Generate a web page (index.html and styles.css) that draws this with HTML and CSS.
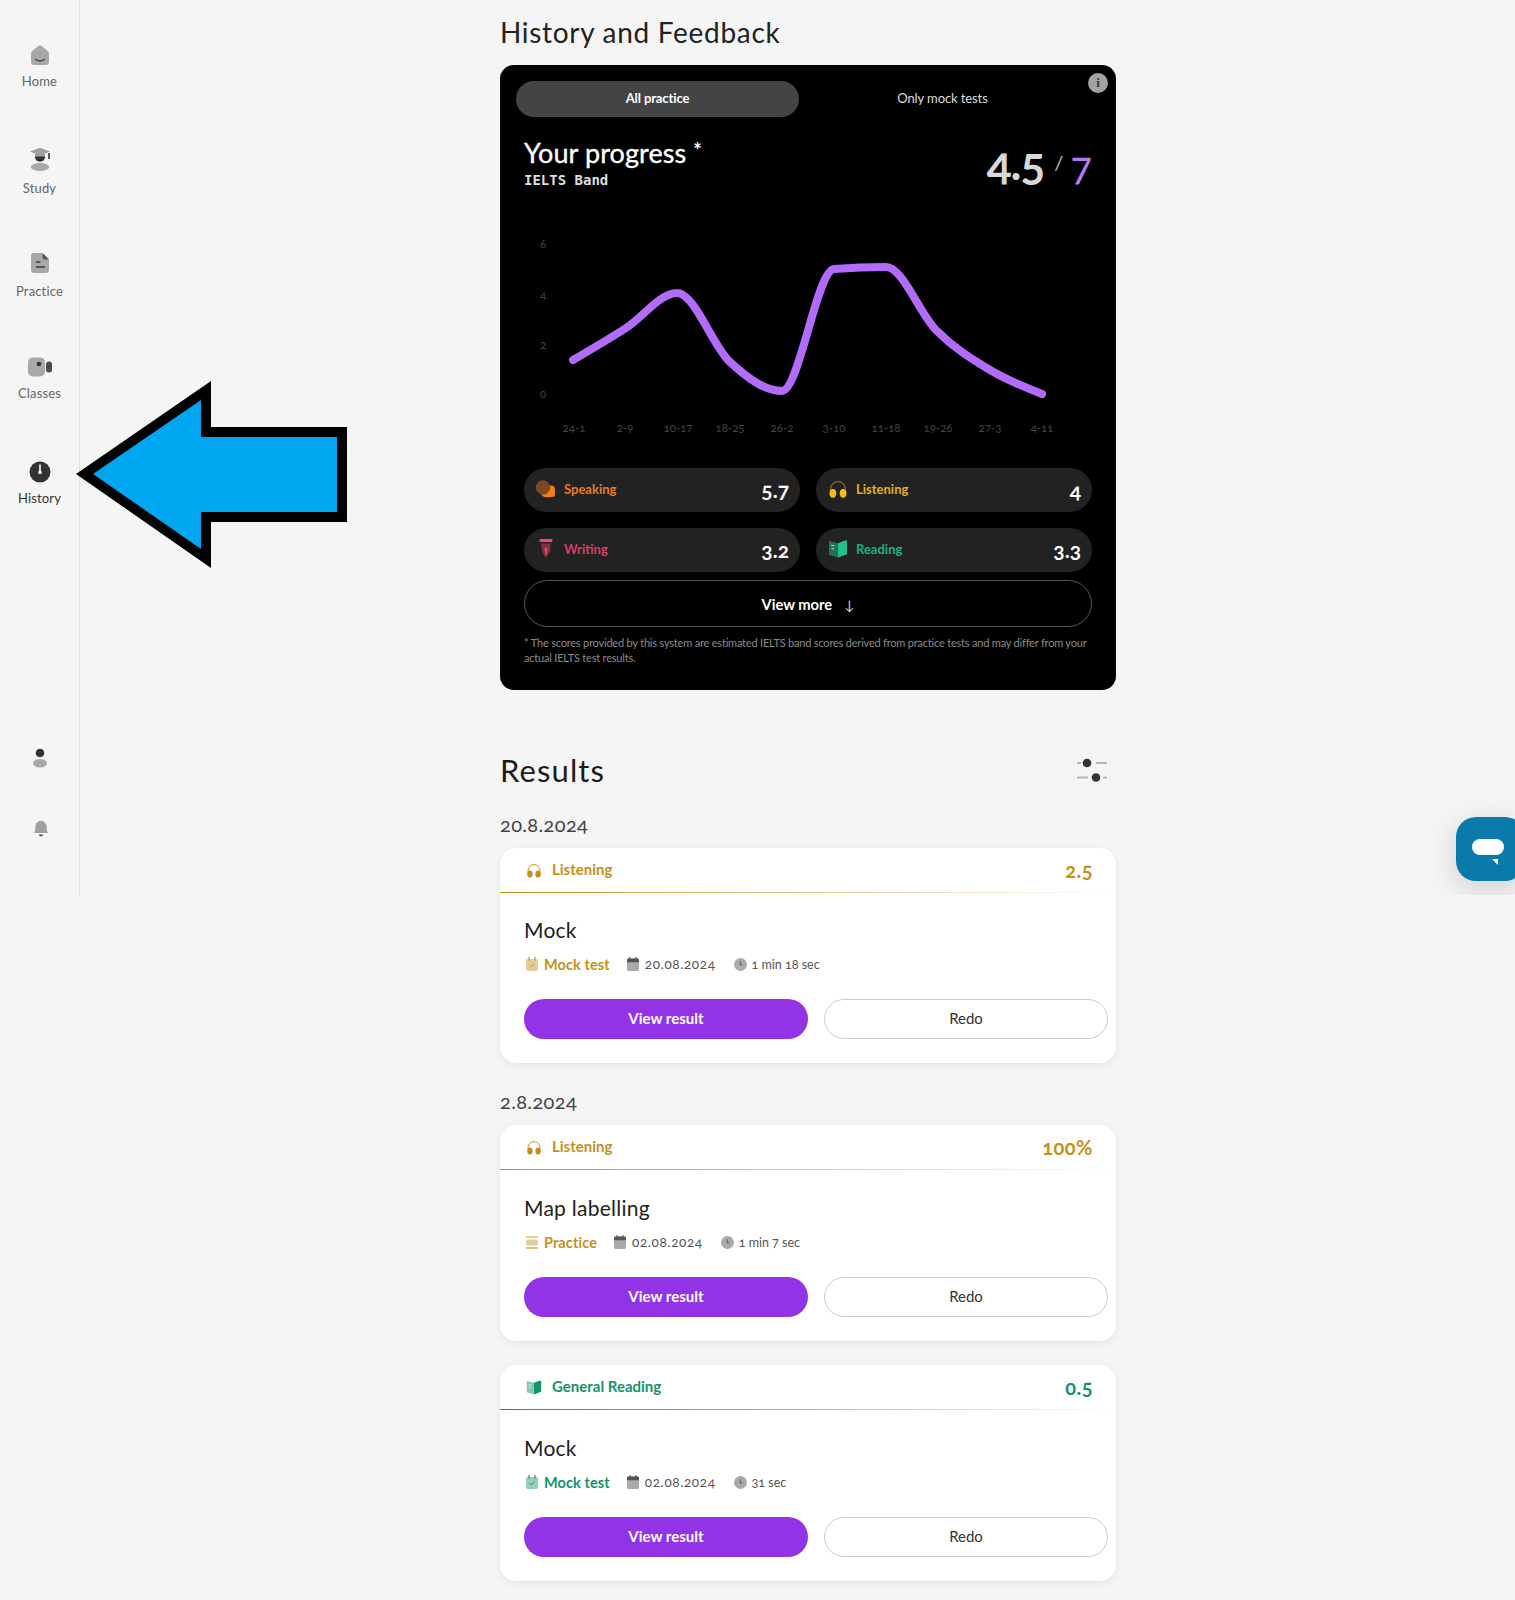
FILE: index.html
```html
<!DOCTYPE html>
<html lang="en">
<head>
<meta charset="utf-8">
<title>History and Feedback</title>
<link rel="stylesheet" href="styles.css">
</head>
<body>
<svg class="defs" width="0" height="0" aria-hidden="true">
  <symbol id="i-headphones" viewBox="0 0 20 18">
    <path d="M2.6 11V9a7.4 7.4 0 0 1 14.8 0v2" fill="none" stroke="var(--arc, currentColor)" stroke-width="1.2"/>
    <ellipse cx="4.9" cy="13.3" rx="3.4" ry="4.4" fill="currentColor"/>
    <ellipse cx="15.1" cy="13.3" rx="3.4" ry="4.4" fill="currentColor"/>
  </symbol>
  <symbol id="i-book" viewBox="0 0 20 18">
    <path d="M10 3.2 1 1v14l9 2.6z" fill="currentColor" opacity=".5"/>
    <path d="M10 3.2 17 .6c1.2-.4 2 .2 2 1.2v12.4L10 17.6z" fill="currentColor"/>
    <path d="M3.4 5.2 6.4 6M3.4 8.4 6 9" stroke="#fff" stroke-opacity=".7" stroke-width="1" fill="none"/>
  </symbol>
  <symbol id="i-mock" viewBox="0 0 12 14">
    <rect x="0" y="2" width="12" height="12" rx="2" fill="currentColor" opacity=".45"/>
    <path d="M3 0v3.5M9 0v3.5" stroke="currentColor" stroke-width="1.2" fill="none"/>
    <path d="M3.8 8 5.5 9.6 8.4 6.8" stroke="currentColor" stroke-width="1" fill="none"/>
  </symbol>
  <symbol id="i-calendar" viewBox="0 0 12 14">
    <rect x="0" y="1.5" width="12" height="12.5" rx="1.6" fill="#aaa"/>
    <path d="M0 5.2V3.1c0-.9.7-1.6 1.6-1.6h8.8c.9 0 1.6.7 1.6 1.6v2.1z" fill="#555"/>
    <path d="M3 0v2M9 0v2" stroke="#555" stroke-width="1.1"/>
  </symbol>
  <symbol id="i-clock" viewBox="0 0 13 13">
    <circle cx="6.5" cy="6.5" r="6.5" fill="#aaa"/>
    <path d="M6.3 3.4v3.5h2" fill="none" stroke="#555" stroke-width="1"/>
  </symbol>
  <symbol id="i-practice" viewBox="0 0 12 14">
    <path d="M0 2h12" stroke="currentColor" stroke-width="1.1" opacity=".8"/>
    <rect x="0" y="4.5" width="12" height="6" rx="1.5" fill="currentColor" opacity=".45"/>
    <path d="M0 13h12" stroke="currentColor" stroke-width="1.1"/>
  </symbol>
</svg>

<div class="page">
  <aside class="sidebar">
    <nav class="nav">
      <a class="nav-item nav-item-home">
        <svg class="nav-icon" viewBox="0 0 24 24"><path d="M3 10.5c0-1 .4-1.7 1.2-2.3L10.5 2.8c.9-.7 2.1-.7 3 0L19.8 8.2c.8.6 1.2 1.3 1.2 2.3V19c0 1.7-1.3 3-3 3H6c-1.7 0-3-1.3-3-3z" fill="#a8a8a8"/><path d="M7.5 16.5c2.5 1.7 6.5 1.7 9 0" fill="none" stroke="#3a3a3a" stroke-width="1.3" stroke-linecap="round"/></svg>
        <span class="nav-label">Home</span>
      </a>
      <a class="nav-item nav-item-study">
        <svg class="nav-icon" viewBox="0 0 24 24"><ellipse cx="12" cy="20" rx="9.3" ry="4" fill="#a8a8a8"/><path d="M7 8h10v1c0 3.7-1.7 5.7-5 5.700S7 12.700 7 9z" fill="#333"/><path d="M2 4.500 12 .7l10 3.800-10 3.900z" fill="#a0a0a0"/><path d="M7 7h10v2.500H7z" fill="#a0a0a0"/><path d="M21 6v6" stroke="#333" stroke-width="1.6"/></svg>
        <span class="nav-label">Study</span>
      </a>
      <a class="nav-item nav-item-practice">
        <svg class="nav-icon" viewBox="0 0 24 24"><path d="M5.5 2h9L21 8.500V19c0 1.700-1.300 3-3 3H6c-1.700 0-3-1.300-3-3V4.500C3 3.100 4.100 2 5.500 2z" fill="#a8a8a8"/><path d="M14.500 2 21 8.500h-4.500c-1.100 0-2-.9-2-2z" fill="#555"/><path d="M8 11h4.500M8 16h9" stroke="#3a3a3a" stroke-width="1.400"/></svg>
        <span class="nav-label">Practice</span>
      </a>
      <a class="nav-item nav-item-classes">
        <svg class="nav-icon nav-icon-wide" viewBox="0 0 26 24"><rect x="0" y="2.500" width="17" height="19" rx="5" fill="#a8a8a8"/><circle cx="11" cy="9" r="2.300" fill="#333"/><rect x="18" y="6.500" width="6" height="11" rx="3" fill="#4a4a4a"/></svg>
        <span class="nav-label">Classes</span>
      </a>
      <a class="nav-item nav-item-active">
        <svg class="nav-icon" viewBox="0 0 24 24"><circle cx="12" cy="12" r="10.500" fill="#333"/><path d="M12 4.500v8" stroke="#fff" stroke-width="1.600"/><circle cx="12" cy="12.500" r="1.800" fill="#fff"/></svg>
        <span class="nav-label">History</span>
      </a>
    </nav>
    <div class="side-tools">
      <svg class="tool-icon" viewBox="0 0 20 20"><circle cx="10" cy="5" r="4.300" fill="#333"/><ellipse cx="10" cy="15.300" rx="7" ry="4.200" fill="#a8a8a8"/></svg>
      <svg class="tool-icon tool-bell" viewBox="0 0 20 20"><path d="M2.500 15c1.300-1 1.700-2 1.700-4.500C4.200 6 6.500 2.800 10 2.800s5.800 3.200 5.800 7.700c0 2.500.4 3.500 1.700 4.500z" fill="#a0a0a0"/><path d="M7.500 16.500h5l-1.500 1.700H9z" fill="#444"/></svg>
    </div>
  </aside>

  <main class="main">
    <h1 class="page-title">History and Feedback</h1>

    <section class="progress">
      <div class="tabs">
        <button class="tab tab-on">All practice</button>
        <button class="tab">Only mock tests</button>
      </div>
      <span class="info">i</span>
      <div class="progress-head">
        <div>
          <h2 class="progress-title">Your progress <sup class="star">*</sup></h2>
          <p class="progress-sub">IELTS Band</p>
        </div>
        <p class="band"><span class="band-now">4.5</span><span class="band-sep">/</span><span class="band-goal">7</span></p>
      </div>

      <svg class="chart" viewBox="0 0 616 243" width="616" height="243">
        <g class="chart-y">
          <text x="43" y="23">6</text>
          <text x="43" y="74">4</text>
          <text x="43" y="124">2</text>
          <text x="43" y="173">0</text>
        </g>
        <g class="chart-x">
          <text x="74" y="207">24-1</text>
          <text x="125" y="207">2-9</text>
          <text x="178" y="207">10-17</text>
          <text x="230" y="207">18-25</text>
          <text x="282" y="207">26-2</text>
          <text x="334" y="207">3-10</text>
          <text x="386" y="207">11-18</text>
          <text x="438" y="207">19-26</text>
          <text x="490" y="207">27-3</text>
          <text x="542" y="207">4-11</text>
        </g>
        <path class="chart-line" d="M73 135C90.67 124.7 108.33 114.4 126 103C143 92.1 160 68 177 68C194.67 68 212.33 120.6 230 137C247.33 153.07 264.67 166 282 166C299.33 166 316.67 45.33 334 44C351.33 42.67 368.67 42 386 42C402.67 42 419.33 88.2 436 105C454 123.2 472 134.2 490 145C507.33 155.4 524.67 162.2 542 169"/>
      </svg>

      <div class="stats">
        <div class="stat stat-speaking">
          <svg class="stat-icon" viewBox="0 0 20 18"><path d="M9 5.500h6a4 4 0 0 1 4 4c0 2 .2 5-.5 7-3 .8-8 .8-10 .5A6 6 0 0 1 9 5.500z" fill="#f57c17"/><circle cx="7" cy="7.500" r="7.200" fill="#7c4a21"/></svg>
          <span class="stat-name">Speaking</span><b class="stat-num">5.7</b>
        </div>
        <div class="stat stat-listening">
          <svg class="stat-icon"><use href="#i-headphones"/></svg>
          <span class="stat-name">Listening</span><b class="stat-num">4</b>
        </div>
        <div class="stat stat-writing">
          <svg class="stat-icon stat-icon-tall" viewBox="0 0 20 20"><rect x="3.500" y="0" width="13" height="3" rx="1" fill="#f2496b"/><path d="M5 4.500h10l-1 8-4 7-4-7z" fill="#7d2f42"/><path d="M10 8v8" stroke="#f2496b" stroke-width="1.400"/><circle cx="10" cy="10.500" r="1.500" fill="#f2496b"/></svg>
          <span class="stat-name">Writing</span><b class="stat-num">3.2</b>
        </div>
        <div class="stat stat-reading">
          <svg class="stat-icon"><use href="#i-book"/></svg>
          <span class="stat-name">Reading</span><b class="stat-num">3.3</b>
        </div>
      </div>

      <button class="more">View more <span class="more-arrow">↓</span></button>
      <p class="disclaimer">* The scores provided by this system are estimated IELTS band scores derived from practice tests and may differ from your actual IELTS test results.</p>
    </section>

    <div class="results-head">
      <h2 class="results-title">Results</h2>
      <svg class="filter" viewBox="0 0 30 26"><path d="M0 5h4M19 5h11M0 19.500h11M26 19.500h4" stroke="#b5b5b5" stroke-width="2"/><circle cx="10" cy="5" r="4.300" fill="#333"/><circle cx="19" cy="19.500" r="4.300" fill="#333"/></svg>
    </div>

    <h3 class="date date-first">20.8.2024</h3>
    <article class="result result-gold">
      <header class="result-head">
        <svg class="result-icon"><use href="#i-headphones"/></svg>
        <span class="result-skill">Listening</span>
        <span class="result-score">2.5</span>
      </header>
      <div class="result-body">
        <h4 class="result-title">Mock</h4>
        <div class="meta">
          <span class="meta-kind"><svg class="meta-ic"><use href="#i-mock"/></svg>Mock test</span>
          <span class="meta-date"><svg class="meta-ic"><use href="#i-calendar"/></svg>20.08.2024</span>
          <span class="meta-time"><svg class="meta-ic meta-ic-clock"><use href="#i-clock"/></svg>1 min 18 sec</span>
        </div>
        <div class="actions">
          <button class="btn btn-primary">View result</button>
          <button class="btn btn-ghost">Redo</button>
        </div>
      </div>
    </article>

    <h3 class="date">2.8.2024</h3>
    <article class="result result-gold result-tall">
      <header class="result-head">
        <svg class="result-icon"><use href="#i-headphones"/></svg>
        <span class="result-skill">Listening</span>
        <span class="result-score">100%</span>
      </header>
      <div class="result-body">
        <h4 class="result-title">Map labelling</h4>
        <div class="meta">
          <span class="meta-kind"><svg class="meta-ic"><use href="#i-practice"/></svg>Practice</span>
          <span class="meta-date"><svg class="meta-ic"><use href="#i-calendar"/></svg>02.08.2024</span>
          <span class="meta-time"><svg class="meta-ic meta-ic-clock"><use href="#i-clock"/></svg>1 min 7 sec</span>
        </div>
        <div class="actions">
          <button class="btn btn-primary">View result</button>
          <button class="btn btn-ghost">Redo</button>
        </div>
      </div>
    </article>

    <article class="result result-green result-tall result-next">
      <header class="result-head">
        <svg class="result-icon"><use href="#i-book"/></svg>
        <span class="result-skill">General Reading</span>
        <span class="result-score">0.5</span>
      </header>
      <div class="result-body">
        <h4 class="result-title">Mock</h4>
        <div class="meta">
          <span class="meta-kind"><svg class="meta-ic"><use href="#i-mock"/></svg>Mock test</span>
          <span class="meta-date"><svg class="meta-ic"><use href="#i-calendar"/></svg>02.08.2024</span>
          <span class="meta-time"><svg class="meta-ic meta-ic-clock"><use href="#i-clock"/></svg>31 sec</span>
        </div>
        <div class="actions">
          <button class="btn btn-primary">View result</button>
          <button class="btn btn-ghost">Redo</button>
        </div>
      </div>
    </article>
  </main>

  <div class="viewport-layer">
    <div class="chat">
      <svg class="chat-icon" viewBox="0 0 32 26"><rect width="32" height="16" rx="8" fill="#fff"/><path d="M20 20h6v6z" fill="#fff"/></svg>
    </div>
  </div>

  <svg class="callout" viewBox="0 0 280 190" width="280" height="190" aria-hidden="true">
    <path d="M0 93 135 0V46H271V141H135V187z" fill="#000"/>
    <path d="M17 93 125 19V56H261V131H125V168z" fill="#00a6f0"/>
  </svg>
</div>
</body>
</html>
```

FILE: styles.css
```css
* { box-sizing: border-box; }
html, body { margin: 0; padding: 0; }
body {
  background: #f5f5f5;
  color: #222;
  font-family: "Lato", "Open Sans", sans-serif;
  font-variant-numeric: oldstyle-nums;
}
h1, h2, h3, h4, p { margin: 0; font-weight: 400; }
button { font: inherit; cursor: pointer; }
.defs { position: absolute; }

.page { position: relative; display: flex; align-items: flex-start; min-height: 1600px; }

/* sidebar */
.sidebar {
  flex: none;
  width: 80px;
  height: 895px;
  border-right: 1px solid #e2e2e2;
  display: flex;
  flex-direction: column;
}
.nav { display: flex; flex-direction: column; padding-top: 43px; }
.nav-item {
  height: 104px;
  display: flex;
  flex-direction: column;
  align-items: center;
  color: #666;
}
.nav-icon { width: 24px; height: 24px; flex: none; }
.nav-icon-wide { width: 26px; margin-left: 2px; }
.nav-label { font-size: 13px; line-height: 18px; margin-top: 6px; letter-spacing: .15px; }
.nav-item-home .nav-label { margin-top: 5px; }
.nav-item-study .nav-label { margin-top: 8px; }
.nav-item-practice .nav-label { margin-top: 7px; }
.nav-item-classes .nav-label { margin-top: 5px; }
.nav-item-active { color: #333; }
.nav-item-active .nav-icon { margin-top: 1px; }
.nav-item-active .nav-label { margin-top: 5px; }
.side-tools {
  margin-top: 184px;
  padding-top: 1px;
  display: flex;
  flex-direction: column;
  align-items: center;
  gap: 50px;
}
.tool-icon { width: 20px; height: 20px; }
.tool-bell { margin-left: 2px; }

/* main column */
.main { width: 616px; margin-left: 420px; padding-top: 14px; }
.page-title { font-size: 28px; line-height: 36px; color: #222; letter-spacing: .7px; margin-bottom: 15px; }

.progress { position: relative; background: #000; border-radius: 14px; color: #fff; height: 625px; }
.tabs { display: grid; grid-template-columns: 283px 287px; padding: 16px 16px 0; }
.tab { height: 36px; padding: 0 0 2px; border: 0; border-radius: 18px; background: transparent; color: #ddd; font-size: 13px; letter-spacing: -.1px; }
.tab-on { background: #444; color: #fff; font-weight: 700; }
.info {
  position: absolute; top: 8px; right: 8px;
  width: 20px; height: 20px; border-radius: 50%;
  background: #a3a3a3; color: #333;
  font: 700 13px/20px "Liberation Serif", serif;
  text-align: center;
}
.progress-head { display: flex; justify-content: space-between; align-items: flex-start; height: 72px; padding: 21px 24px 0; }
.progress-title { font-size: 27px; line-height: 30px; letter-spacing: .1px; -webkit-text-stroke: .35px #fff; }
.star { font-size: 20px; font-weight: 700; line-height: 0; vertical-align: 5px; -webkit-text-stroke: 0; }
.progress-sub { font: 700 14px/18px "DejaVu Sans Mono", monospace; color: #ddd; margin-top: 3px; }
.band { display: flex; align-items: baseline; line-height: 52px; margin-top: -1px; }
.band-now { font-size: 46px; font-weight: 700; letter-spacing: -1px; color: #d8d8d8; }
.band-sep { font-size: 20px; color: #bbb; margin: 0 7px 0 10px; position: relative; top: -10px; }
.band-goal { font-size: 40px; color: #b57bee; }

.chart { display: block; margin-top: 36px; }
.chart text { font-family: "Lato", sans-serif; font-size: 11.5px; fill: #444; text-anchor: middle; font-variant-numeric: oldstyle-nums; }
.chart-line { fill: none; stroke: #b26bfa; stroke-width: 8; stroke-linecap: round; stroke-linejoin: round; }

.stats { display: grid; grid-template-columns: 276px 276px; gap: 16px; padding: 0 24px; }
.stat { height: 44px; border-radius: 22px; background: #222; display: flex; align-items: center; padding: 0 11px 0 12px; }
.stat-icon { width: 20px; height: 18px; flex: none; margin-top: -3px; }
.stat-icon-tall { height: 20px; }
.stat-name { font-size: 13px; font-weight: 700; margin-left: 8px; margin-top: -2px; }
.stat-num { margin-left: auto; font-size: 21px; font-weight: 700; color: #fff; margin-top: -2px; }
.stat-speaking .stat-name { color: #ea7a1c; }
.stat-listening { color: #f1c014; --arc: #7c6a2a; }
.stat-listening .stat-name { color: #e2b01c; }
.stat-writing .stat-name { color: #d83e62; }
.stat-reading { color: #1fc08a; }
.stat-reading .stat-name { color: #1fb07f; }

.more {
  display: block; width: 568px; height: 47px; margin: 8px 24px 0;
  background: transparent; color: #fff; border: 1px solid #555; border-radius: 24px;
  font-size: 14.7px; font-weight: 700;
}
.more-arrow { font-weight: 400; margin-left: 9px; font-size: 13px; color: #ddd; }
.disclaimer { font-size: 11px; line-height: 15px; letter-spacing: -.2px; color: #8a8a8a; margin: 8px 24px 0; }

/* results */
.results-head { display: flex; justify-content: space-between; align-items: center; height: 36px; margin-top: 62px; padding-right: 9px; }
.results-title { font-size: 31px; line-height: 36px; letter-spacing: 1.1px; color: #1c1c1c; }
.filter { width: 30px; height: 26px; margin-top: 1px; }
.date { font-size: 20px; line-height: 24px; color: #444; letter-spacing: .35px; margin: 26px 0 12px; }
.date-first { margin: 24px 0 12px; }

.result { background: #fff; border-radius: 16px; box-shadow: 0 2px 8px rgba(0, 0, 0, .07); }
.result-next { margin-top: 24px; }
.result-gold { --accent: #c68f1c; }
.result-green { --accent: #13936a; }
.result-head {
  position: relative;
  display: flex; align-items: center;
  height: 45px; padding: 0 23px 0 24px;
  color: var(--accent);
}
.result-head::after {
  content: "";
  position: absolute; left: 0; right: 0; bottom: 0; height: 1px;
  background: linear-gradient(90deg, var(--accent), transparent);
}
.result-icon { width: 16px; height: 15px; margin: 0 10px 0 2px; flex: none; }
.result-skill { font-size: 15px; font-weight: 700; margin-top: -3px; }
.result-score { margin-left: auto; font-size: 20px; font-weight: 700; letter-spacing: .5px; margin-top: -2px; }
.result-body { padding: 23px 8px 24px 24px; }
.result-tall .result-body { padding-top: 24px; }
.result-title { font-size: 21px; line-height: 28px; color: #222; letter-spacing: .25px; }
.meta { display: flex; align-items: center; height: 20px; margin-top: 10px; color: #555; white-space: nowrap; }
.meta-kind, .meta-date, .meta-time { display: flex; align-items: center; }
.meta-ic { width: 12px; height: 14px; margin-right: 6px; flex: none; }
.meta-ic-clock { width: 13px; height: 13px; margin-right: 5px; }
.meta-kind { font-size: 14.5px; font-weight: 700; letter-spacing: .1px; color: var(--accent); margin-left: 2px; margin-right: 17px; }
.meta-date { font-size: 13.5px; margin-right: 18px; letter-spacing: .6px; }
.meta-time { font-size: 12.5px; }
.actions { display: grid; grid-template-columns: 284px 284px; gap: 16px; margin-top: 25px; }
.btn { height: 40px; padding: 0 0 2px; border-radius: 20px; font-size: 15px; }
.btn-primary { border: 0; background: #9333e6; color: #fff; font-weight: 700; }
.btn-ghost { border: 1px solid #ccc; background: #fff; color: #333; }

/* overlays */
.viewport-layer { position: absolute; top: 0; left: 0; right: 0; height: 895px; overflow: hidden; pointer-events: none; }
.chat {
  position: absolute; top: 817px; right: -10px;
  width: 69px; height: 64px;
  background: #0a7aaa; border-radius: 20px;
  box-shadow: 0 8px 32px rgba(0, 0, 0, .16);
  padding: 22px 0 0 16px;
}
.chat-icon { display: block; width: 32px; height: 26px; }
.callout { position: absolute; left: 76px; top: 381px; }
```
